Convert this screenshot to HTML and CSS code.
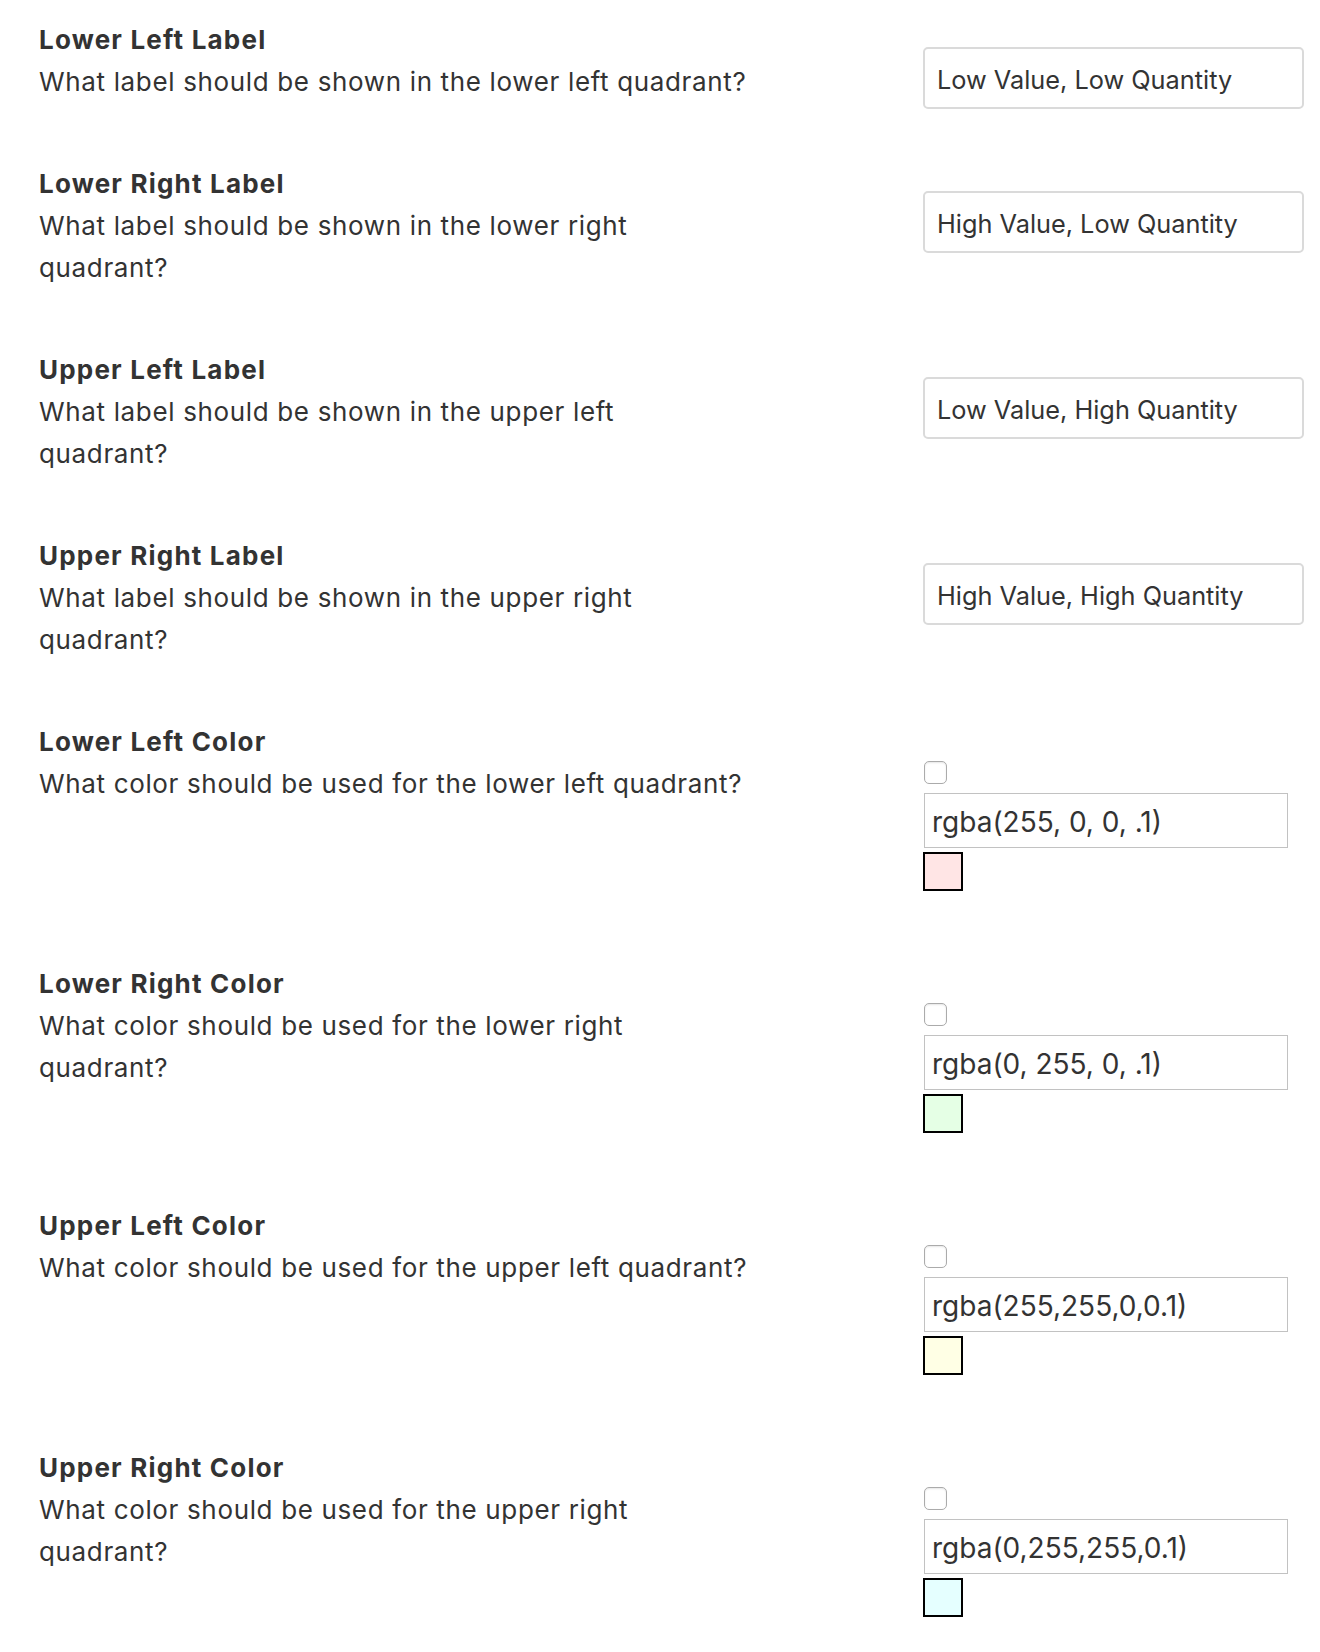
FILE: index.html
```html
<!DOCTYPE html>
<html lang="en">
<head>
<meta charset="utf-8">
<title>Quadrant settings</title>
<link rel="stylesheet" href="styles.css">
</head>
<body>
<main class="settings">
  <div class="row">
    <div class="info">
      <div class="label">Lower Left Label</div>
      <p class="desc">What label should be shown in the lower left quadrant?</p>
    </div>
    <div class="field">
      <input class="text-input" type="text" value="Low Value, Low Quantity">
    </div>
  </div>
  <div class="row">
    <div class="info">
      <div class="label">Lower Right Label</div>
      <p class="desc">What label should be shown in the lower right quadrant?</p>
    </div>
    <div class="field">
      <input class="text-input" type="text" value="High Value, Low Quantity">
    </div>
  </div>
  <div class="row">
    <div class="info">
      <div class="label">Upper Left Label</div>
      <p class="desc">What label should be shown in the upper left quadrant?</p>
    </div>
    <div class="field">
      <input class="text-input" type="text" value="Low Value, High Quantity">
    </div>
  </div>
  <div class="row">
    <div class="info">
      <div class="label">Upper Right Label</div>
      <p class="desc">What label should be shown in the upper right quadrant?</p>
    </div>
    <div class="field">
      <input class="text-input" type="text" value="High Value, High Quantity">
    </div>
  </div>
  <div class="row">
    <div class="info">
      <div class="label">Lower Left Color</div>
      <p class="desc">What color should be used for the lower left quadrant?</p>
    </div>
    <div class="field color-field">
      <input class="check" type="checkbox">
      <input class="color-input" type="text" value="rgba(255, 0, 0, .1)">
      <span class="swatch" style="background: rgba(255, 0, 0, .1)"></span>
    </div>
  </div>
  <div class="row">
    <div class="info">
      <div class="label">Lower Right Color</div>
      <p class="desc">What color should be used for the lower right quadrant?</p>
    </div>
    <div class="field color-field">
      <input class="check" type="checkbox">
      <input class="color-input" type="text" value="rgba(0, 255, 0, .1)">
      <span class="swatch" style="background: rgba(0, 255, 0, .1)"></span>
    </div>
  </div>
  <div class="row">
    <div class="info">
      <div class="label">Upper Left Color</div>
      <p class="desc">What color should be used for the upper left quadrant?</p>
    </div>
    <div class="field color-field">
      <input class="check" type="checkbox">
      <input class="color-input" type="text" value="rgba(255,255,0,0.1)">
      <span class="swatch" style="background: rgba(255, 255, 0, .1)"></span>
    </div>
  </div>
  <div class="row">
    <div class="info">
      <div class="label">Upper Right Color</div>
      <p class="desc">What color should be used for the upper right quadrant?</p>
    </div>
    <div class="field color-field">
      <input class="check" type="checkbox">
      <input class="color-input" type="text" value="rgba(0,255,255,0.1)">
      <span class="swatch" style="background: rgba(0, 255, 255, .1)"></span>
    </div>
  </div>
</main>
</body>
</html>
```

FILE: styles.css
```css
html, body {
  margin: 0;
  padding: 0;
  background: #ffffff;
}

body {
  font-family: Inter, "Open Sans", "Liberation Sans", Arial, sans-serif;
  color: #333333;
}

.settings {
  padding: 19px 0 0 39px;
}

.row {
  display: grid;
  grid-template-columns: 884px 381px;
  align-items: start;
  padding-bottom: 54px;
}

.info {
  max-width: 709px;
  padding-bottom: 6px;
}

.label {
  font-size: 26px;
  line-height: 42px;
  font-weight: 700;
  letter-spacing: 1.2px;
  color: #333333;
}

.desc {
  margin: 0;
  font-size: 26px;
  line-height: 42px;
  letter-spacing: 0.65px;
  color: #333333;
}

.field {
  padding-top: 28px;
}

.text-input {
  display: block;
  box-sizing: border-box;
  width: 381px;
  height: 62px;
  margin: 0;
  padding: 2px 12px 0;
  border: 2px solid #dadada;
  border-radius: 5px;
  background: #ffffff;
  font-family: Inter, "Open Sans", "Liberation Sans", Arial, sans-serif;
  font-size: 25.3px;
  color: #333333;
  outline: none;
}

.color-field {
  display: flex;
  flex-direction: column;
  align-items: flex-start;
  padding-top: 40px;
  padding-bottom: 18px;
}

.check {
  appearance: none;
  -webkit-appearance: none;
  box-sizing: border-box;
  width: 23px;
  height: 23px;
  margin: 0 0 0 1px;
  border: 1px solid #ababab;
  border-radius: 5px;
  background: #ffffff;
  box-shadow: inset 0 1px 2px rgba(0, 0, 0, 0.1);
}

.color-input {
  display: block;
  box-sizing: border-box;
  width: 364px;
  height: 55px;
  margin: 9px 0 0 1px;
  padding: 3px 7px 0;
  border: 1px solid #c2c2c2;
  border-radius: 0;
  background: #ffffff;
  font-family: Inter, "Open Sans", "Liberation Sans", Arial, sans-serif;
  font-size: 28px;
  color: #333333;
  outline: none;
}

.swatch {
  display: block;
  box-sizing: border-box;
  width: 40px;
  height: 39px;
  margin-top: 4px;
  border: 2px solid #000000;
}
```
